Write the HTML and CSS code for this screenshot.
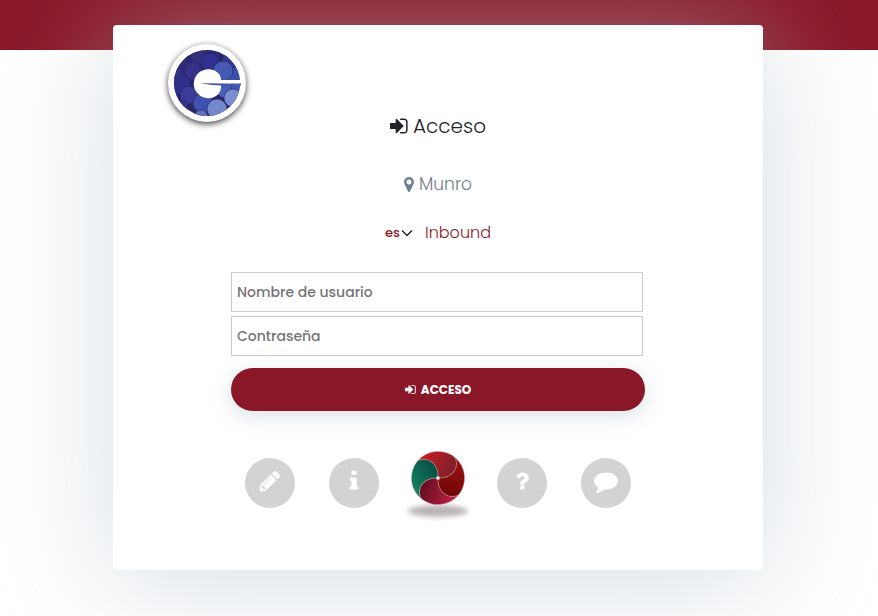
FILE: index.html
```html
<!DOCTYPE html>
<html lang="es">
<head>
<meta charset="utf-8">
<meta name="viewport" content="width=device-width, initial-scale=1">
<title>Acceso</title>
<link rel="stylesheet" href="styles.css">
</head>
<body>
<svg class="defs" aria-hidden="true">
  <symbol id="sign-in" viewBox="160 128 1536 1536"><path d="M1312 896q0 26-19 45l-544 544q-19 19-45 19t-45-19-19-45v-288h-448q-26 0-45-19t-19-45v-384q0-26 19-45t45-19h448v-288q0-26 19-45t45-19 45 19l544 544q19 19 19 45zm352-352v704q0 119-84.5 203.5t-203.5 84.5h-320q-13 0-22.5-9.5t-9.5-22.5q0-4-1-20t-.5-26.5 3-23.5 10-19.5 20.5-6.5h320q66 0 113-47t47-113v-704q0-66-47-113t-113-47h-312l-11.5-1-11.5-3-8-5.5-7-9-2-13.5q0-4-1-20t-.5-26.5 3-23.5 10-19.5 20.5-6.5h320q119 0 203.5 84.5t84.5 203.5z"/></symbol>
</svg>
<header class="topbar"></header>
<main class="page">
  <section class="card">
    <svg class="logo" viewBox="0 0 78 78" role="img" aria-label="Logo">
      <defs>
        <clipPath id="disc"><circle cx="39" cy="39" r="33"/></clipPath>
        <linearGradient id="tongue" x1="0" x2="1"><stop offset="0" stop-color="#35388f"/><stop offset="1" stop-color="#4a60b5"/></linearGradient>
      </defs>
      <circle cx="39" cy="39" r="39" fill="#fff"/>
      <g clip-path="url(#disc)">
        <rect width="78" height="78" fill="#2a2868"/>
        <g stroke="#252366" stroke-width=".6">
          <circle cx="30" cy="12" r="8" fill="#33307c"/>
          <circle cx="46" cy="9" r="7" fill="#2c2a74"/>
          <circle cx="16" cy="20" r="8" fill="#2f2b77"/>
          <circle cx="62" cy="17" r="8" fill="#343a90"/>
          <circle cx="42" cy="18" r="9" fill="#332f90"/>
          <circle cx="9" cy="31" r="7" fill="#35337f"/>
          <circle cx="25" cy="27" r="9" fill="#35308a"/>
          <circle cx="68" cy="33" r="10" fill="#3b4fa8"/>
          <circle cx="55" cy="27" r="10" fill="#445ab2"/>
          <circle cx="13" cy="41" r="10" fill="#322e8c"/>
          <circle cx="21" cy="51" r="9" fill="#3d3b99"/>
          <circle cx="13" cy="62" r="7" fill="#34338a"/>
          <circle cx="57" cy="46" r="8" fill="#4660b8"/>
          <circle cx="70" cy="43" r="7" fill="#3f59b2"/>
          <circle cx="35" cy="59" r="10" fill="#3f52ad"/>
          <circle cx="65" cy="54" r="9" fill="#7b8dce"/>
          <circle cx="49" cy="65" r="10" fill="#7489cc"/>
          <circle cx="33" cy="73" r="7" fill="#6173bd"/>
        </g>
      </g>
      <path d="M53 36H73V40H53Q53.500 46 50.500 50A14.500 14.500 0 1 1 51.500 30.500Q53 33 53 36Z" fill="#fff"/>
      <path d="M32 39.300L53 39.600H73V41.500H53Q42 41.300 32 39.300Z" fill="url(#tongue)"/>
    </svg>
    <h1 class="title"><svg class="icon-title"><use href="#sign-in"/></svg>Acceso</h1>
    <p class="place"><svg class="icon-pin" viewBox="384 128 1024 1536"><path d="M1152 640q0-106-75-181t-181-75-181 75-75 181 75 181 181 75 181-75 75-181zm256 0q0 109-33 179l-364 774q-16 33-47.500 52t-67.500 19-67.500-19-46.500-52l-365-774q-33-70-33-179 0-212 150-362t362-150 362 150 150 362z"/></svg>Munro</p>
    <div class="options">
      <span class="lang">
        <select class="lang-select" aria-label="Idioma"><option>es</option></select>
        <svg class="lang-arrow" viewBox="0 0 12 8"><path d="M1 1.500L6 6.500L11 1.500"/></svg>
      </span>
      <a class="mode" href="#">Inbound</a>
    </div>
    <form class="login">
      <input class="field" type="text" placeholder="Nombre de usuario" aria-label="Nombre de usuario">
      <input class="field" type="password" placeholder="Contraseña" aria-label="Contraseña">
      <button class="submit" type="submit"><svg class="icon-submit"><use href="#sign-in"/></svg>ACCESO</button>
    </form>
    <nav class="links">
      <a class="round" href="#" aria-label="Editar"><svg class="glyph" viewBox="0 0 1792 1792"><path d="M491 1536l91-91-235-235-91 91v107h128v128h107zm523-928q0-22-22-22-10 0-17 7l-542 542q-7 7-7 17 0 22 22 22 10 0 17-7l542-542q7-7 7-17zm-54-192l416 416-832 832h-416v-416zm683 96q0 53-37 90l-166 166-416-416 166-165q36-38 90-38 53 0 91 38l235 234q37 39 37 91z"/></svg></a>
      <a class="round" href="#" aria-label="Información"><svg class="glyph" viewBox="0 0 1792 1792"><path d="M1216 1344v128q0 26-19 45t-45 19h-512q-26 0-45-19t-19-45v-128q0-26 19-45t45-19h64v-384h-64q-26 0-45-19t-19-45v-128q0-26 19-45t45-19h384q26 0 45 19t19 45v576h64q26 0 45 19t19 45zm-128-1152v192q0 26-19 45t-45 19h-256q-26 0-45-19t-19-45v-192q0-26 19-45t45-19h256q26 0 45 19t19 45z"/></svg></a>
      <a class="ball-link" href="#" aria-label="Inicio">
        <svg class="ball" viewBox="-42 -33 84 76">
          <defs>
            <linearGradient id="p-top" gradientUnits="userSpaceOnUse" x1="-14" y1="-22" x2="14" y2="-6"><stop offset="0" stop-color="#c41c24"/><stop offset="1" stop-color="#7d2029"/></linearGradient>
            <linearGradient id="p-right" gradientUnits="userSpaceOnUse" x1="-20" y1="-20" x2="16" y2="-10"><stop offset="0" stop-color="#a11116"/><stop offset="1" stop-color="#700606"/></linearGradient>
            <linearGradient id="p-bottom" gradientUnits="userSpaceOnUse" x1="-18" y1="-20" x2="16" y2="-8"><stop offset="0" stop-color="#c01f45"/><stop offset="1" stop-color="#640f22"/></linearGradient>
            <linearGradient id="p-left" gradientUnits="userSpaceOnUse" x1="-8" y1="-26" x2="8" y2="-2"><stop offset="0" stop-color="#13805f"/><stop offset="1" stop-color="#075046"/></linearGradient>
            <filter id="soft" x="-30%" y="-100%" width="160%" height="300%"><feGaussianBlur stdDeviation="2.500"/></filter>
          </defs>
          <ellipse cx="0" cy="33" rx="30" ry="6" fill="#8c8484" fill-opacity=".6" filter="url(#soft)"/>
          <g stroke="#d9a5a0" stroke-opacity=".6" stroke-width=".6">
            <path fill="url(#p-top)" d="M0 0C1-14-10-22-20.500-17A26.700 26.700 0 0 1 17-20.500C22-10 14 1 0 0Z"/>
            <path fill="url(#p-right)" transform="rotate(90)" d="M0 0C1-14-10-22-20.500-17A26.700 26.700 0 0 1 17-20.500C22-10 14 1 0 0Z"/>
            <path fill="url(#p-bottom)" transform="rotate(180)" d="M0 0C1-14-10-22-20.500-17A26.700 26.700 0 0 1 17-20.500C22-10 14 1 0 0Z"/>
            <path fill="url(#p-left)" transform="rotate(270)" d="M0 0C1-14-10-22-20.500-17A26.700 26.700 0 0 1 17-20.500C22-10 14 1 0 0Z"/>
          </g>
          <rect x="-1.500" y="-1.500" width="3" height="3" fill="#fff"/>
        </svg>
      </a>
      <a class="round" href="#" aria-label="Ayuda"><svg class="glyph" viewBox="0 0 1792 1792"><path d="M1088 1256v240q0 16-12 28t-28 12h-240q-16 0-28-12t-12-28v-240q0-16 12-28t28-12h240q16 0 28 12t12 28zm316-600q0 54-15.500 101t-35 76.500-55 59.500-57.500 43.500-61 35.500q-41 23-68.500 65t-27.500 67q0 17-12 32.500t-28 15.500h-240q-15 0-25.500-18.500t-10.500-37.500v-45q0-83 65-156.500t143-108.500q59-27 84-56t25-76q0-42-46.500-74t-107.500-32q-65 0-108 29-35 25-107 115-13 16-31 16-12 0-25-8l-164-125q-13-10-15.500-25t5.500-28q160-266 464-266 80 0 161 31t146 83 106 127.500 41 158.500z"/></svg></a>
      <a class="round" href="#" aria-label="Comentarios"><svg class="glyph" viewBox="0 0 1792 1792"><path d="M1792 896q0 174-120 321.500t-326 233-450 85.500q-70 0-145-8-198 175-460 242-49 14-114 22-17 2-30.500-9t-17.500-29v-1q-3-4-.5-12t2-10 4.500-9.500l6-9 7-8.500 8-9q7-8 31-34.500t34.500-38 31-39.500 32.500-51 27-59 26-76q-157-89-247.500-220t-90.500-281q0-130 71-248.500t191-204.500 286-136.500 348-50.500q244 0 450 85.500t326 233 120 321.500z"/></svg></a>
    </nav>
  </section>
</main>
</body>
</html>
```
FILE: styles.css
```css
* {
  box-sizing: border-box;
}

body {
  min-height: 100vh;
  margin: 0;
  background: #fff;
  color: #212529;
  font-family: Poppins, Inter, "Open Sans", sans-serif;
}

.defs {
  display: none;
}

.topbar {
  height: 50px;
  background: #8a1727;
}

.page {
  margin-top: -25px;
  padding: 0 2px 46px 0;
}

.card {
  display: flex;
  flex-direction: column;
  align-items: center;
  max-width: 650px;
  margin: 0 auto;
  padding: 19px 55px 49px;
  border-radius: 4px;
  background: #fff;
  box-shadow: 0 10px 120px rgba(180, 195, 205, 0.58);
}

.logo {
  align-self: flex-start;
  width: 78px;
  height: 78px;
  margin-bottom: -8px;
  overflow: visible;
  filter: drop-shadow(0 2px 3px rgba(0, 0, 0, 0.75));
}

.title,
.place {
  display: flex;
  align-items: center;
  gap: 5px;
  margin: 0;
  line-height: 24px;
}

.title {
  font-size: 20px;
  font-weight: 300;
}

.icon-title {
  width: 18px;
  height: 18px;
  fill: currentColor;
}

.place {
  margin-top: 34px;
  color: #708090;
  font-size: 17px;
  font-weight: 300;
}

.icon-pin {
  width: 10px;
  height: 15px;
  fill: currentColor;
}

.options {
  display: flex;
  align-items: center;
  gap: 12px;
  margin-top: 25px;
  line-height: 24px;
}

.lang {
  display: grid;
  align-items: center;
}

.lang-select,
.lang-arrow {
  grid-area: 1 / 1;
}

.lang-select {
  width: 28px;
  padding: 0;
  border: 0;
  appearance: none;
  background: transparent;
  color: #8a1727;
  font: 500 13px/24px Poppins, Inter, "Open Sans", sans-serif;
}

.lang-arrow {
  justify-self: end;
  width: 12px;
  height: 8px;
  fill: none;
  stroke: #212529;
  stroke-width: 1.5;
  pointer-events: none;
}

.mode {
  color: #8a1727;
  font-size: 16px;
  font-weight: 300;
  text-decoration: none;
}

.login {
  display: flex;
  flex-direction: column;
  gap: 4px;
  width: 100%;
  max-width: 414px;
  margin-top: 27px;
}

.field {
  height: 40px;
  margin-right: 2px;
  padding: 0 5px;
  border: 1px solid #ccc;
  background: #fff;
  font: 500 14px/20px Poppins, Inter, "Open Sans", sans-serif;
}

.field::placeholder {
  color: #757575;
}

.submit {
  display: flex;
  align-items: center;
  justify-content: center;
  gap: 5px;
  height: 43px;
  margin-top: 8px;
  border: 0;
  border-radius: 22px;
  background: #8a1727;
  color: #fff;
  font: 700 12px/20px Poppins, Inter, "Open Sans", sans-serif;
  box-shadow: 0 5px 20px rgba(180, 195, 205, 0.5);
}

.icon-submit {
  width: 11px;
  height: 11px;
  fill: currentColor;
}

.links {
  display: flex;
  align-items: center;
  justify-content: center;
  margin-top: 34px;
}

.round {
  display: flex;
  align-items: center;
  justify-content: center;
  width: 50px;
  height: 50px;
  margin: 0 17px;
  padding-bottom: 4px;
  border-radius: 50%;
  background: #d3d3d3;
}

.glyph {
  width: 24px;
  height: 24px;
  fill: #fff;
}

.ball {
  display: block;
  width: 84px;
  height: 76px;
}
```
